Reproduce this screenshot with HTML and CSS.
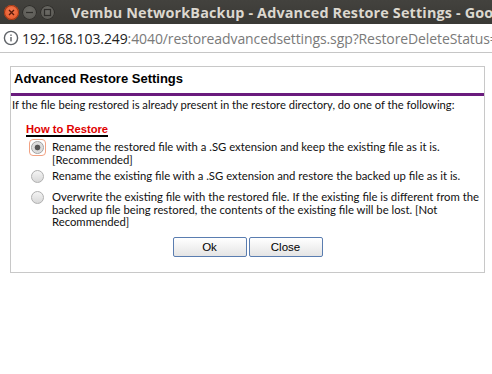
FILE: index.html
```html
<!DOCTYPE html>
<html>
<head>
<meta charset="utf-8">
<link rel="stylesheet" href="styles.css">
</head>
<body>
<div class="titlebar">
  <div class="wbtns">
    <span class="wbtn close"><svg width="15" height="15" viewBox="0 0 15 15"><path d="M5 5 L10 10 M10 5 L5 10" stroke="#5a1a0a" stroke-width="1.4"/></svg></span>
    <span class="wbtn"><svg width="15" height="15" viewBox="0 0 15 15"><path d="M4 7.5 H11" stroke="#2f2e2b" stroke-width="1.3"/></svg></span>
    <span class="wbtn"><svg width="15" height="15" viewBox="0 0 15 15"><rect x="4.5" y="4.5" width="6" height="6" fill="none" stroke="#2f2e2b" stroke-width="1.2"/></svg></span>
  </div>
  <div class="wtitle">Vembu NetworkBackup - Advanced Restore Settings - Google Chrome</div>
</div>
<div class="addr">
  <svg class="info" width="16" height="16" viewBox="0 0 16 16"><circle cx="8" cy="8" r="6.6" fill="none" stroke="#5f6368" stroke-width="1.4"/><rect x="7.3" y="7" width="1.4" height="4.4" fill="#5f6368"/><rect x="7.3" y="4.5" width="1.4" height="1.4" fill="#5f6368"/></svg>
  <span class="url"><span class="host">192.168.103.249</span>:4040/restoreadvancedsettings.sgp?RestoreDeleteStatus=1</span>
</div>
<div class="page">
  <div class="panel">
    <h1 class="ptitle">Advanced Restore Settings</h1>
    <div class="rule"></div>
    <p class="desc">If the file being restored is already present in the restore directory, do one of the following:</p>
    <div class="howto"><span class="howlabel">How to Restore</span></div>
    <div class="options">
      <div class="opt"><span class="radio checked"></span><span class="otext">Rename the restored file with a .SG extension and keep the existing file as it is. [Recommended]</span></div>
      <div class="opt"><span class="radio"></span><span class="otext">Rename the existing file with a .SG extension and restore the backed up file as it is.</span></div>
      <div class="opt"><span class="radio"></span><span class="otext">Overwrite the existing file with the restored file. If the existing file is different from the backed up file being restored, the contents of the existing file will be lost. [Not Recommended]</span></div>
    </div>
    <div class="btns">
      <button class="btn">Ok</button>
      <button class="btn">Close</button>
    </div>
  </div>
</div>
</body>
</html>
```
FILE: styles.css
```css
html, body { margin: 0; padding: 0; background: #fff; }
body { width: 492px; height: 374px; overflow: hidden; }
.titlebar {
  height: 24px;
  background: linear-gradient(#43423e, #3a3935);
  display: flex;
  align-items: center;
  white-space: nowrap;
  overflow: hidden;
}
.wbtns { display: flex; gap: 3px; margin-left: 4px; }
.wbtn {
  width: 15px; height: 15px; border-radius: 50%;
  background: radial-gradient(circle at 50% 40%, #6c6b66, #55544f);
  box-shadow: inset 0 0 0 1px #2e2d2a;
  display: block;
}
.wbtn svg { display: block; }
.wbtn.close { background: radial-gradient(circle at 50% 40%, #f47a52, #e0501f); box-shadow: inset 0 0 0 1px #9c3715; }
.wtitle {
  margin-left: 16px;
  font-family: "Open Sans", "DejaVu Sans", sans-serif;
  font-weight: bold;
  font-size: 14.4px;
  color: #dcd8cf;
  letter-spacing: 0.15px;
}
.addr {
  height: 28px;
  border-bottom: 1px solid #c6c6c6;
  display: flex;
  align-items: center;
  white-space: nowrap;
  overflow: hidden;
}
.info { margin-left: 3px; margin-right: 3px; flex: none; }
.url {
  font-family: "Open Sans", "DejaVu Sans", sans-serif;
  font-size: 14px;
  color: #7a7a7a;
  letter-spacing: -0.1px;
}
.host { color: #222; }
.page { padding: 13px 7px 0 10px; }
.panel {
  border: 1px solid #c8c8c8;
  height: 207px;
  box-sizing: border-box;
}
.ptitle {
  margin: 0;
  padding: 4px 0 0 3px;
  height: 22px;
  box-sizing: border-box;
  font-family: "Liberation Sans", Arial, sans-serif;
  font-weight: bold;
  font-size: 13px;
  color: #000;
}
.rule { height: 3px; background: #6a1b7d; margin: 4px 0 0 0; }
.desc {
  margin: 2px 0 0 0;
  padding-left: 1px;
  font-family: Lato, sans-serif;
  font-size: 11.2px;
  line-height: 13px;
  color: #111;
}
.howto { margin: 8px 0 0 15px; }
.howlabel {
  display: inline-block;
  font-family: "Liberation Sans", Arial, sans-serif;
  font-weight: bold;
  font-size: 11.2px;
  line-height: 12px;
  color: #e00000;
  border-bottom: 2px solid #000;
}
.options { margin-top: 4px; padding-left: 19px; padding-right: 4px; }
.opt { display: flex; align-items: flex-start; margin-bottom: 4px; }
.radio {
  flex: none;
  position: relative;
  width: 11px; height: 11px;
  border-radius: 50%;
  border: 1px solid #b0b0b0;
  background: linear-gradient(#f4f4f4, #d8d8d8);
  margin: 0 8px 4px 1px;
  box-sizing: content-box;
}
.radio.checked {
  background: radial-gradient(circle, #555 0, #555 2.5px, #d8d8d8 3.2px, #ececec 100%);
  border-color: #a0a0a0;
}
.radio.checked::after {
  content: "";
  position: absolute;
  left: -3px; top: -3px; right: -3px; bottom: -3px;
  border: 1.5px solid #f2a283;
  border-radius: 4px;
}
.otext {
  font-family: Lato, sans-serif;
  font-size: 11.3px;
  line-height: 12.5px;
  color: #111;
}
.btns { display: flex; justify-content: center; gap: 2px; margin-top: 8px; }
.btn {
  width: 74px; height: 20px;
  border: 1px solid #5a7db0;
  border-radius: 2px;
  background: linear-gradient(#ffffff, #e4e4e4);
  font-family: "Liberation Sans", Arial, sans-serif;
  font-size: 11.5px;
  color: #000;
  padding: 0;
}
```
